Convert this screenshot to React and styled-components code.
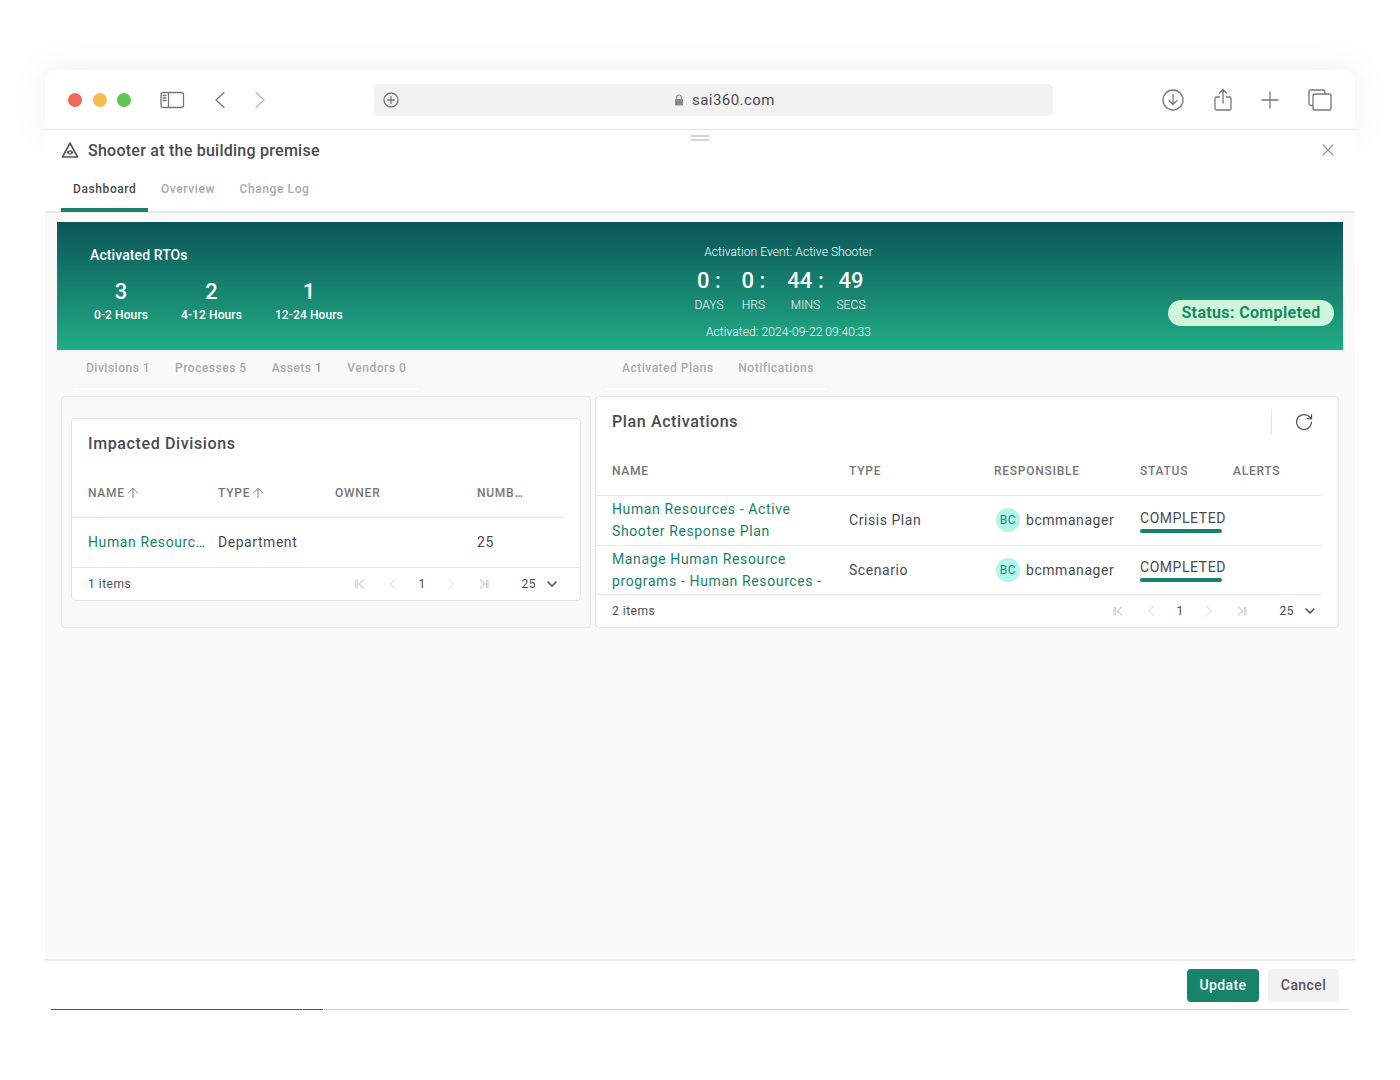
import React from "react";
import styled, { createGlobalStyle } from "styled-components";
import { ArrowUp, ChevronDown, ChevronLeft, ChevronRight, RotateCw, X } from "lucide-react";

const GlobalStyle = createGlobalStyle`
  html, body {
    margin: 0;
    background: #fff;
    font-family: Roboto, "Liberation Sans", sans-serif;
    color: #4a4a50;
  }
  * {
    box-sizing: border-box;
  }
`;

const green = "#17826a";

const Page = styled.div`
  height: 1080px;
  padding: 70px 45px 0;
`;

const Browser = styled.div`
  height: 940px;
  display: flex;
  flex-direction: column;
`;

/* Safari toolbar */
const Toolbar = styled.div`
  height: 60px;
  flex: none;
  display: flex;
  align-items: center;
  padding: 0 23px;
  background: #fff;
  border-bottom: 1px solid #e3e3e3;
  border-radius: 12px 12px 0 0;
  box-shadow: 0 0 40px rgba(0, 0, 0, 0.07);
`;

const Lights = styled.div`
  display: flex;
  gap: 10.5px;
  margin-right: 29px;
`;

const Light = styled.span`
  width: 14px;
  height: 14px;
  border-radius: 50%;
  background: ${(p) => p.$color};
`;

const ToolIcon = styled.svg`
  flex: none;
  fill: none;
  stroke: ${(p) => p.$stroke || "#777"};
  stroke-width: 1.3;
  stroke-linecap: round;
  stroke-linejoin: round;
  margin-left: ${(p) => p.$left || 0}px;
`;

const UrlBar = styled.div`
  width: 679px;
  height: 32px;
  margin-left: 108px;
  padding: 0 9px;
  display: flex;
  align-items: center;
  background: #f2f2f2;
  border-radius: 5px;
`;

const UrlText = styled.div`
  display: flex;
  align-items: center;
  gap: 8px;
  margin-left: 275px;
  font-size: 15px;
  letter-spacing: 0.45px;
  color: #4a4a50;
`;

const ToolActions = styled.div`
  display: flex;
  align-items: center;
  margin-left: 109px;
`;

/* Dialog */
const Dialog = styled.div`
  flex: 1;
  min-height: 0;
  display: flex;
  flex-direction: column;
  background: #fff;
  position: relative;
`;

const DragHandle = styled.div`
  position: absolute;
  top: 5px;
  left: 646px;
  width: 18px;
  height: 6px;
  border-top: 2px solid #d5d5d5;
  border-bottom: 2px solid #d5d5d5;
`;

const TitleRow = styled.div`
  height: 40px;
  flex: none;
  display: flex;
  align-items: center;
  padding: 0 17px 0 16px;
`;

const Title = styled.div`
  flex: 1;
  margin-left: 9px;
  font-size: 16px;
  font-weight: 500;
  letter-spacing: 0.25px;
`;

const TabBar = styled.div`
  height: 43px;
  flex: none;
  display: flex;
  padding-left: 16px;
  border-bottom: 2px solid #eaeaea;
`;

const Tab = styled.div`
  height: 42px;
  padding: 12px 12px 0;
  margin-right: 0.5px;
  font-size: 12px;
  font-weight: 500;
  letter-spacing: 0.6px;
  color: ${(p) => (p.$active ? "#4a4a50" : "#a9a9ad")};
  border-bottom: ${(p) => (p.$active ? `4px solid ${green}` : "none")};
`;

const Body = styled.div`
  flex: 1;
  min-height: 0;
  padding: 9px 12px 0;
  background: #f9f9f9;
`;

const Banner = styled.div`
  height: 128px;
  display: flex;
  color: #fff;
  background: linear-gradient(180deg, #0b5558 0%, #21ac85 100%);
`;

const Rtos = styled.div`
  width: 578px;
  padding: 25px 0 0 33px;
`;

const RtoHeading = styled.div`
  font-size: 14px;
  font-weight: 500;
  line-height: 16px;
  letter-spacing: 0.1px;
`;

const RtoList = styled.div`
  display: flex;
  gap: 33px;
  margin-top: 15px;
  padding-left: 4px;
`;

const Rto = styled.div`
  text-align: center;
`;

const RtoValue = styled.div`
  font-size: 22px;
  font-weight: 500;
  line-height: 27px;
`;

const RtoLabel = styled.div`
  font-size: 12px;
  font-weight: 500;
  line-height: 20px;
  letter-spacing: 0.1px;
`;

const Activation = styled.div`
  width: 307px;
  padding-top: 23px;
  text-align: center;
  font-size: 12px;
  font-weight: 300;
  letter-spacing: 0.08px;
`;

const Countdown = styled.div`
  display: grid;
  grid-template-columns: 44px 45px 59px 32px;
  margin: 7px 0 0 52px;
`;

const CountValue = styled.div`
  font-size: 22px;
  font-weight: 500;
  line-height: 30px;
  white-space: pre;
`;

const CountLabel = styled.div`
  line-height: 18px;
`;

const ActivatedAt = styled.div`
  margin-top: 9px;
  line-height: 18px;
`;

const StatusPill = styled.div`
  margin: auto 9px 24px auto;
  width: 166px;
  height: 26px;
  padding-bottom: 2px;
  display: flex;
  align-items: center;
  justify-content: center;
  border-radius: 13px;
  background: #cdf5dc;
  color: #178a62;
  font-size: 16px;
  font-weight: 700;
  letter-spacing: 0.35px;
  white-space: nowrap;
`;

const SubTabRow = styled.div`
  height: 40px;
  display: grid;
  grid-template-columns: 532px 1fr;
  padding-left: 17px;
`;

const SubTabs = styled.div`
  width: fit-content;
  display: flex;
  gap: 25px;
  align-items: center;
  padding: 0 12px 2px;
  padding-left: ${(p) => p.$left}px;
  border-bottom: 2px solid #fff;
  font-size: 12px;
  font-weight: 500;
  letter-spacing: 0.5px;
  color: #a9a9ad;
`;

const Panels = styled.div`
  display: flex;
  gap: 4px;
  margin: 6px 4px 0;
  height: 232px;
`;

const LeftPanel = styled.div`
  width: 530px;
  flex: none;
  padding: 21px 9px 0;
  border: 1px solid #e8e8e8;
  border-radius: 4px;
`;

const Card = styled.div`
  flex: 1;
  background: #fff;
  border: 1px solid #e6e6e6;
  border-radius: 4px;
`;

const CardHead = styled.div`
  height: 49px;
  display: flex;
  align-items: center;
  padding: 0 16px;
`;

const CardTitle = styled.div`
  flex: 1;
  font-size: 16px;
  font-weight: 500;
  letter-spacing: 0.62px;
`;

const Refresh = styled.div`
  width: 43px;
  height: 25px;
  display: flex;
  align-items: center;
  justify-content: flex-end;
  margin-right: 8px;
  border-left: 1px solid #e6e6e6;
  color: #55555a;
`;

const Grid = styled.div`
  margin-right: ${(p) => (p.$full ? 0 : 16)}px;
  display: grid;
  grid-template-columns: ${(p) => p.$columns};
  align-items: center;
  padding-left: 16px;
  height: ${(p) => p.$height}px;
  border-bottom: 1px solid #e8e8e8;
`;

const HeadCell = styled.div`
  display: flex;
  align-items: center;
  font-size: 12px;
  font-weight: 500;
  letter-spacing: 0.75px;
  color: #77777b;
  text-transform: uppercase;
`;

const Cell = styled.div`
  font-size: 14px;
  letter-spacing: 0.55px;
  white-space: nowrap;
`;

const LinkCell = styled(Cell)`
  color: ${green};
  line-height: 22px;
  letter-spacing: 0.62px;
  padding-right: 12px;
  overflow: hidden;
  white-space: ${(p) => (p.$wrap ? "normal" : "nowrap")};
`;

const Person = styled.div`
  display: flex;
  align-items: center;
  gap: 6px;
  padding-left: 2px;
  font-size: 14px;
  letter-spacing: 0.55px;
`;

const Avatar = styled.span`
  width: 24px;
  height: 24px;
  display: flex;
  align-items: center;
  justify-content: center;
  border-radius: 50%;
  background: #b2f5ea;
  color: #1a8f86;
  font-size: 12px;
`;

const StatusCell = styled.div`
  width: 82px;
  font-size: 14px;
  letter-spacing: 0.55px;
  line-height: 16px;
  white-space: nowrap;
  margin-top: 2px;
`;

const StatusBar = styled.div`
  height: 4px;
  margin-top: 3px;
  border-radius: 2px;
  background: ${green};
`;

const PagerRow = styled.div`
  height: 32px;
  display: flex;
  align-items: center;
  padding: 0 16px;
  font-size: 12px;
  letter-spacing: 0.5px;
`;

const Pager = styled.div`
  margin-left: auto;
  margin-right: -16px;
  padding-right: 13px;
  display: grid;
  grid-template-columns: 30px 36px 22px 36px 30px 37px 31px;
  justify-items: center;
  align-items: center;
  color: #d2d2d5;
`;

const PageNumber = styled.span`
  color: #4a4a50;
`;

const PageSize = styled.span`
  color: #4a4a50;
  justify-self: end;
`;

const PageArrow = styled.svg`
  fill: none;
  stroke: currentColor;
  stroke-width: 1.2;
`;

const Footer = styled.div`
  flex: none;
  height: 51px;
  display: flex;
  justify-content: flex-end;
  align-items: flex-start;
  gap: 9px;
  padding: 8px 16px 0;
  border-top: 2px solid #ededed;
`;

const Button = styled.button`
  height: 33px;
  width: ${(p) => p.$width}px;
  padding: 0 0 2px;
  border: none;
  border-radius: 4px;
  background: ${(p) => (p.$primary ? "#17836a" : "#f2f2f2")};
  color: ${(p) => (p.$primary ? "#fff" : "#55555a")};
  font-family: inherit;
  font-size: 14px;
  font-weight: 500;
  letter-spacing: 0.4px;
`;

const BottomLine = styled.div`
  flex: none;
  height: 1px;
  margin: -1px 6px 0;
  display: flex;
  gap: 1px;
`;

const LineSegment = styled.span`
  display: block;
  height: 1px;
  flex: ${(p) => (p.$width ? `0 0 ${p.$width}px` : 1)};
  background: ${(p) => p.$color};
`;

const divisionColumns = "130px 117px 142px 1fr";
const planColumns = "237px 145px 146px 93px 1fr";

const plans = [
  { name: "Human Resources - Active Shooter Response Plan", type: "Crisis Plan" },
  { name: "Manage Human Resource programs - Human Resources -", type: "Scenario" },
];

const Pagination = () => (
  <Pager>
    <PageArrow width="12" height="12" viewBox="0 0 12 12">
      <path d="M2 2v8M3.500 2v8M10 1.500 5 6l5 4.500" />
    </PageArrow>
    <ChevronLeft size={20} strokeWidth={1.1} />
    <PageNumber>1</PageNumber>
    <ChevronRight size={20} strokeWidth={1.1} />
    <PageArrow width="12" height="12" viewBox="0 0 12 12">
      <path d="M2 1.500 7 6l-5 4.500M8.500 2v8M10 2v8" />
    </PageArrow>
    <PageSize>25</PageSize>
    <ChevronDown size={16} strokeWidth={2.2} color="#4a4a50" />
  </Pager>
);

const App = () => {
  return (
    <Page>
      <GlobalStyle />
      <Browser>
        <Toolbar>
          <Lights>
            <Light $color="#ee6a5e" />
            <Light $color="#f5bd4f" />
            <Light $color="#61c454" />
          </Lights>
          <ToolIcon width="25" height="18" viewBox="0 0 25 18">
            <rect x="1" y="1.500" width="22.500" height="15" rx="2" />
            <path d="M8.500 1.500v15M3 4.500h3M3 7h3M3 9.500h3" />
          </ToolIcon>
          <ToolIcon width="12" height="18" viewBox="0 0 12 18" $left={29}>
            <path d="M10 1.500 2 9l8 7.500" />
          </ToolIcon>
          <ToolIcon width="12" height="18" viewBox="0 0 12 18" $left={28} $stroke="#b5b5b5">
            <path d="M2 1.500 10 9l-8 7.500" />
          </ToolIcon>
          <UrlBar>
            <ToolIcon width="16" height="16" viewBox="0 0 16 16">
              <circle cx="8" cy="8" r="7" />
              <path d="M8 4.500v7M4.500 8h7" />
            </ToolIcon>
            <UrlText>
              <svg width="10" height="12" viewBox="0 0 10 12">
                <path d="M2.500 5V3.500a2.500 2.500 0 0 1 5 0V5" fill="none" stroke="#888" strokeWidth="1.1" />
                <rect x="1" y="5" width="8" height="6.500" rx="1" fill="#888" />
              </svg>
              sai360.com
            </UrlText>
          </UrlBar>
          <ToolActions>
            <ToolIcon width="22" height="22" viewBox="0 0 22 22">
              <circle cx="11" cy="11" r="10" />
              <path d="M11 5.500v10M7 11.500l4 4 4-4" />
            </ToolIcon>
            <ToolIcon width="18" height="24" viewBox="0 0 18 24" $left={30}>
              <path d="M5.500 9H2.500a1.500 1.500 0 0 0-1.500 1.500v10A1.500 1.500 0 0 0 2.500 22h13a1.500 1.500 0 0 0 1.500-1.500v-10A1.500 1.500 0 0 0 15.500 9h-3M9 15V1.500M5.500 5 9 1.500 12.500 5" />
            </ToolIcon>
            <ToolIcon width="18" height="18" viewBox="0 0 18 18" $left={29}>
              <path d="M9 1v16M1 9h16" />
            </ToolIcon>
            <ToolIcon width="24" height="22" viewBox="0 0 24 22" $left={29}>
              <path d="M5 16.500H3a2 2 0 0 1-2-2V3a2 2 0 0 1 2-2h12a2 2 0 0 1 2 2v2" />
              <rect x="5" y="5" width="18" height="16" rx="2" />
            </ToolIcon>
          </ToolActions>
        </Toolbar>

        <Dialog>
          <DragHandle />
          <TitleRow>
            <svg width="18" height="18" viewBox="0 0 18 18">
              <path d="M9 2 1.500 16h15z" fill="none" stroke="#55555a" strokeWidth="1.6" strokeLinejoin="round" />
              <path d="M5.500 11.500C6.500 10 7.700 9.300 9 9.300s2.500.7 3.500 2.200C11.500 13 10.300 13.500 9 13.500s-2.500-.5-3.500-2z" fill="#55555a" />
              <circle cx="9" cy="11.400" r="1" fill="#fff" />
            </svg>
            <Title>Shooter at the building premise</Title>
            <X size={20} strokeWidth={1.5} color="#9a9a9e" />
          </TitleRow>
          <TabBar>
            <Tab $active>Dashboard</Tab>
            <Tab>Overview</Tab>
            <Tab>Change Log</Tab>
          </TabBar>

          <Body>
            <Banner>
              <Rtos>
                <RtoHeading>Activated RTOs</RtoHeading>
                <RtoList>
                  <Rto>
                    <RtoValue>3</RtoValue>
                    <RtoLabel>0-2 Hours</RtoLabel>
                  </Rto>
                  <Rto>
                    <RtoValue>2</RtoValue>
                    <RtoLabel>4-12 Hours</RtoLabel>
                  </Rto>
                  <Rto>
                    <RtoValue>1</RtoValue>
                    <RtoLabel>12-24 Hours</RtoLabel>
                  </Rto>
                </RtoList>
              </Rtos>
              <Activation>
                <div>Activation Event: Active Shooter</div>
                <Countdown>
                  <CountValue>0 :</CountValue>
                  <CountValue>0 :</CountValue>
                  <CountValue>44 :</CountValue>
                  <CountValue>49</CountValue>
                  <CountLabel>DAYS</CountLabel>
                  <CountLabel>HRS</CountLabel>
                  <CountLabel>MINS</CountLabel>
                  <CountLabel>SECS</CountLabel>
                </Countdown>
                <ActivatedAt>Activated: 2024-09-22 09:40:33</ActivatedAt>
              </Activation>
              <StatusPill>Status: Completed</StatusPill>
            </Banner>

            <SubTabRow>
              <SubTabs $left={12}>
                <span>Divisions 1</span>
                <span>Processes 5</span>
                <span>Assets 1</span>
                <span>Vendors 0</span>
              </SubTabs>
              <SubTabs $left={16}>
                <span>Activated Plans</span>
                <span>Notifications</span>
              </SubTabs>
            </SubTabRow>

            <Panels>
              <LeftPanel>
                <Card>
                  <CardHead>
                    <CardTitle>Impacted Divisions</CardTitle>
                  </CardHead>
                  <Grid $columns={divisionColumns} $height={50}>
                    <HeadCell>Name<ArrowUp size={16} strokeWidth={1.4} /></HeadCell>
                    <HeadCell>Type<ArrowUp size={16} strokeWidth={1.4} /></HeadCell>
                    <HeadCell>Owner</HeadCell>
                    <HeadCell>Numb…</HeadCell>
                  </Grid>
                  <Grid $columns={divisionColumns} $height={49.5} $full>
                    <LinkCell>Human Resourc…</LinkCell>
                    <Cell>Department</Cell>
                    <Cell />
                    <Cell>25</Cell>
                  </Grid>
                  <PagerRow>
                    1 items
                    <Pagination />
                  </PagerRow>
                </Card>
              </LeftPanel>

              <Card>
                <CardHead>
                  <CardTitle>Plan Activations</CardTitle>
                  <Refresh>
                    <RotateCw size={20} strokeWidth={1.5} />
                  </Refresh>
                </CardHead>
                <Grid $columns={planColumns} $height={50}>
                  <HeadCell>Name</HeadCell>
                  <HeadCell>Type</HeadCell>
                  <HeadCell>Responsible</HeadCell>
                  <HeadCell>Status</HeadCell>
                  <HeadCell>Alerts</HeadCell>
                </Grid>
                {plans.map((plan) => (
                  <Grid key={plan.type} $columns={planColumns} $height={49.5}>
                    <LinkCell $wrap>{plan.name}</LinkCell>
                    <Cell>{plan.type}</Cell>
                    <Person>
                      <Avatar>BC</Avatar>
                      bcmmanager
                    </Person>
                    <StatusCell>
                      COMPLETED
                      <StatusBar />
                    </StatusCell>
                    <Cell />
                  </Grid>
                ))}
                <PagerRow>
                  2 items
                  <Pagination />
                </PagerRow>
              </Card>
            </Panels>
          </Body>

          <Footer>
            <Button $primary $width={72}>Update</Button>
            <Button $width={71}>Cancel</Button>
          </Footer>
          <BottomLine>
            <LineSegment $width={251} $color="#55555a" />
            <LineSegment $width={20} $color="#55555a" />
            <LineSegment $color="#cfcfcf" />
          </BottomLine>
        </Dialog>
      </Browser>
    </Page>
  );
};

export default App;
